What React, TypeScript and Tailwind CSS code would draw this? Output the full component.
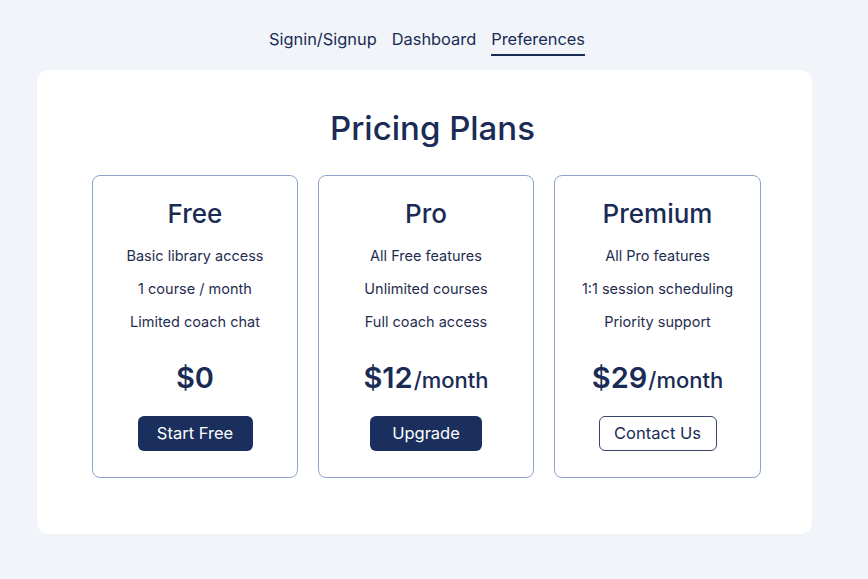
import React from "react";

const plans = [
  {
    name: "Free",
    features: ["Basic library access", "1 course / month", "Limited coach chat"],
    price: "$0",
    per: "",
    cta: "Start Free",
    solid: true,
    width: "w-[206px]",
    btn: "w-[115px]",
  },
  {
    name: "Pro",
    features: ["All Free features", "Unlimited courses", "Full coach access"],
    price: "$12",
    per: "/month",
    cta: "Upgrade",
    solid: true,
    width: "w-[216px]",
    btn: "w-[112px]",
  },
  {
    name: "Premium",
    features: ["All Pro features", "1:1 session scheduling", "Priority support"],
    price: "$29",
    per: "/month",
    cta: "Contact Us",
    solid: false,
    width: "w-[207px]",
    btn: "w-[118px]",
  },
];

export default function App() {
  return (
    <div className="min-h-[579px] bg-[#f1f4f9] font-['Inter','Liberation_Sans',sans-serif] text-[#1a2b55]">
      <nav className="flex justify-center gap-[15px] pt-[27px] pr-[14px]">
        <span className="text-[16.4px] leading-[24px] pb-[5px]">Signin/Signup</span>
        <span className="text-[16.4px] leading-[24px] pb-[5px]">Dashboard</span>
        <span className="text-[16.4px] leading-[24px] pb-[3px] border-b-2 border-[#1a2b55]">Preferences</span>
      </nav>

      <main className="ml-[37px] mt-[14px] w-[775px] rounded-xl bg-white pt-[36px] pb-[56px]">
        <h1 className="text-center text-[33px] leading-[44px] font-medium pl-[16px]">Pricing Plans</h1>

        <div className="mt-[25px] flex justify-center gap-[20px] pl-[4px]">
          {plans.map((p) => (
            <div
              key={p.name}
              className={`${p.width} flex flex-col items-center rounded-lg border border-[#8ca3cc] pt-[22px] pb-[26px]`}
            >
              <h2 className="text-[26px] leading-[32px] font-medium">{p.name}</h2>
              <ul className="mt-[9px] text-center text-[14.5px] leading-[33px] text-[#1f2d50]">
                {p.features.map((f) => (
                  <li key={f}>{f}</li>
                ))}
              </ul>
              <div className="mt-[20px] flex h-[40px] items-baseline overflow-hidden leading-[40px]">
                <span className="text-[29px] font-semibold">{p.price}</span>
                {p.per && <span className="ml-[1px] text-[22px] font-medium">{p.per}</span>}
              </div>
              <button
                className={`${p.btn} mt-[18px] h-[35px] rounded-md text-[16.5px] ${
                  p.solid
                    ? "bg-[#1a2f5e] text-white"
                    : "border border-[#3a4668] bg-white text-[#1a2b55]"
                }`}
              >
                {p.cta}
              </button>
            </div>
          ))}
        </div>
      </main>
    </div>
  );
}
